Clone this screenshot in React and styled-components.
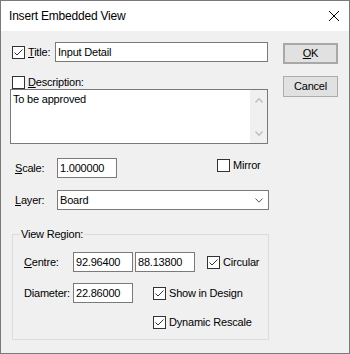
import React from 'react';
import styled, { createGlobalStyle } from 'styled-components';

const GlobalStyle = createGlobalStyle`
  html, body {
    margin: 0;
    padding: 0;
    background: #f0f0f0;
  }
  body {
    font-family: "Liberation Sans", Arial, sans-serif;
  }
`;

const Window = styled.div`
  width: 350px;
  height: 354px;
  box-sizing: border-box;
  border: 1px solid #7a7a7a;
  background: #f0f0f0;
  display: flex;
  flex-direction: column;
  font-size: 11px;
  letter-spacing: -0.2px;
  line-height: 13px;
  color: #000;
`;

const TitleBar = styled.div`
  height: 30px;
  flex-shrink: 0;
  background: #fff;
  display: flex;
  align-items: center;
  justify-content: space-between;
  padding: 0 10px 0 8px;
  font-size: 12px;
  letter-spacing: -0.2px;
`;

const Body = styled.div`
  display: flex;
  padding: 11px 0 0 9px;
`;

const LeftCol = styled.div`
  width: 259px;
  display: flex;
  flex-direction: column;
`;

const RightCol = styled.div`
  margin-left: 14px;
  padding-top: 1px;
  display: flex;
  flex-direction: column;
  gap: 12px;
`;

const Row = styled.div`
  display: flex;
  align-items: center;
  height: ${p => p.$h || 20}px;
  margin-top: ${p => p.$top || 0}px;
  padding-left: ${p => p.$pad || 0}px;
`;

const Label = styled.span`
  white-space: nowrap;
  width: ${p => (p.$w ? `${p.$w}px` : 'auto')};
  flex-shrink: 0;
  margin-left: ${p => p.$ml || 0}px;
`;

const Field = styled.div`
  box-sizing: border-box;
  height: 20px;
  width: ${p => p.$w}px;
  margin-left: ${p => p.$ml || 0}px;
  flex-shrink: 0;
  border: 1px solid #7a7a7a;
  background: #fff;
  padding: 0 2px;
  display: flex;
  align-items: center;
  white-space: nowrap;
`;

const Select = styled(Field)`
  justify-content: space-between;
  padding-right: 5px;
`;

const Memo = styled.div`
  box-sizing: border-box;
  width: 258px;
  height: 55px;
  border: 1px solid #7a7a7a;
  background: #fff;
  display: flex;
`;

const MemoText = styled.div`
  flex: 1;
  padding: 3px 2px;
`;

const ScrollBar = styled.div`
  width: 17px;
  background: #f0f0f0;
  display: flex;
  flex-direction: column;
  justify-content: space-between;
  align-items: center;
  padding: 8px 0 7px;
  box-sizing: border-box;
`;

const Box = styled.span`
  box-sizing: border-box;
  width: 13px;
  height: 13px;
  flex-shrink: 0;
  border: 1px solid #333;
  background: #fff;
  display: inline-flex;
  align-items: center;
  justify-content: center;
  margin-left: ${p => p.$ml || 0}px;
  margin-top: ${p => p.$mt || 0}px;
  align-self: ${p => (p.$mt ? 'flex-start' : 'center')};
`;

const CheckText = styled.span`
  margin-left: 3px;
  white-space: nowrap;
  align-self: ${p => (p.$top ? 'flex-start' : 'center')};
  margin-top: ${p => p.$top || 0}px;
`;

const Group = styled.div`
  box-sizing: border-box;
  width: 257px;
  height: 106px;
  margin: 24px 0 0 2px;
  border: 1px solid #dcdcdc;
`;

const Legend = styled.span`
  display: block;
  width: fit-content;
  margin: -7px 0 0 7px;
  padding: 0 1px;
  background: #f0f0f0;
`;

const Button = styled.div`
  box-sizing: border-box;
  width: 55px;
  height: 21px;
  background: #e1e1e1;
  border: ${p => (p.$default ? '2px solid #a8a8a8' : '1px solid #adadad')};
  display: flex;
  align-items: center;
  justify-content: center;
`;

const Check = ({ checked, ml, mt }) => (
  <Box $ml={ml} $mt={mt}>
    {checked && (
      <svg width="11" height="11" viewBox="0 0 11 11">
        <path d="M1.5 5.5 L4 8 L9.5 2.5" fill="none" stroke="#333" strokeWidth="1" />
      </svg>
    )}
  </Box>
);

const Chevron = ({ up, color = '#555', w = 8, h = 5, sw = 1 }) => (
  <svg width={w} height={h} viewBox={`0 0 ${w} ${h}`}>
    <path
      d={up ? `M0.5 ${h - 0.5} L${w / 2} 0.8 L${w - 0.5} ${h - 0.5}` : `M0.5 0.5 L${w / 2} ${h - 0.8} L${w - 0.5} 0.5`}
      fill="none"
      stroke={color}
      strokeWidth={sw}
    />
  </svg>
);

export default function App() {
  return (
    <>
      <GlobalStyle />
      <Window>
        <TitleBar>
          <span>Insert Embedded View</span>
          <svg width="10" height="10" viewBox="0 0 10 10">
            <path d="M0 0 L10 10 M10 0 L0 10" stroke="#000" strokeWidth="1" />
          </svg>
        </TitleBar>
        <Body>
          <LeftCol>
            <Row>
              <Check checked ml={2} />
              <CheckText><u>T</u>itle:</CheckText>
              <Field $w={213} style={{ marginLeft: 'auto', marginRight: 1 }}>Input Detail</Field>
            </Row>
            <Row $top={14} $h={13}>
              <Check ml={2} />
              <CheckText><u>D</u>escription:</CheckText>
            </Row>
            <Memo>
              <MemoText>To be approved</MemoText>
              <ScrollBar>
                <Chevron up color="#bfbfbf" sw={1.5} />
                <Chevron color="#bfbfbf" sw={1.5} />
              </ScrollBar>
            </Memo>
            <Row $top={14} $pad={5}>
              <Label $w={42}><u>S</u>cale:</Label>
              <Field $w={60}>1.000000</Field>
              <Check ml={100} mt={1} />
              <CheckText $top={1}>Mirror</CheckText>
            </Row>
            <Row $top={12} $pad={5}>
              <Label $w={42}><u>L</u>ayer:</Label>
              <Select $w={212}>
                <span>Board</span>
                <Chevron w={8} h={5} />
              </Select>
            </Row>
            <Group>
              <Legend>View Region:</Legend>
              <Row $top={11} $pad={11}>
                <Label $w={49}><u>C</u>entre:</Label>
                <Field $w={60}>92.96400</Field>
                <Field $w={60} $ml={2}>88.13800</Field>
                <Check checked ml={12} />
                <CheckText>Circular</CheckText>
              </Row>
              <Row $top={11} $pad={11}>
                <Label $w={49}>Diameter:</Label>
                <Field $w={60}>22.86000</Field>
                <Check checked ml={20} />
                <CheckText>Show in Design</CheckText>
              </Row>
              <Row $top={13} $h={13} $pad={140}>
                <Check checked />
                <CheckText>Dynamic Rescale</CheckText>
              </Row>
            </Group>
          </LeftCol>
          <RightCol>
            <Button $default><span><u>O</u>K</span></Button>
            <Button>Cancel</Button>
          </RightCol>
        </Body>
      </Window>
    </>
  );
}
